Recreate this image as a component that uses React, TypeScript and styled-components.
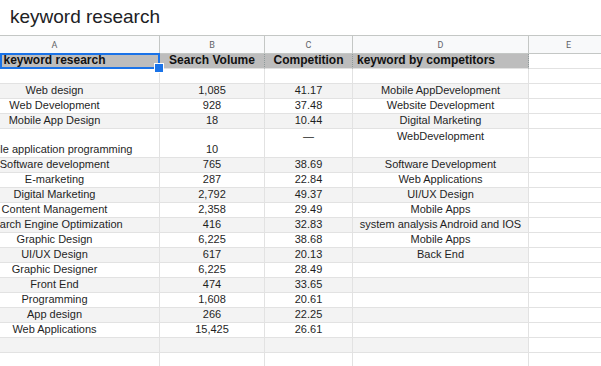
import styled, { createGlobalStyle } from 'styled-components'

interface Row {
  a?: string
  b?: string
  c?: string
  d?: string
  tall?: boolean
}

const rows: Row[] = [
  { a: 'Web design', b: '1,085', c: '41.17', d: 'Mobile AppDevelopment' },
  { a: 'Web Development', b: '928', c: '37.48', d: 'Website Development' },
  { a: 'Mobile App Design', b: '18', c: '10.44', d: 'Digital Marketing' },
  { a: 'Mobile application programming', b: '10', c: '—', d: 'WebDevelopment', tall: true },
  { a: 'Software development', b: '765', c: '38.69', d: 'Software Development' },
  { a: 'E-marketing', b: '287', c: '22.84', d: 'Web Applications' },
  { a: 'Digital Marketing', b: '2,792', c: '49.37', d: 'UI/UX Design' },
  { a: 'Content Management', b: '2,358', c: '29.49', d: 'Mobile Apps' },
  { a: 'Search Engine Optimization', b: '416', c: '32.83', d: 'system analysis Android and IOS' },
  { a: 'Graphic Design', b: '6,225', c: '38.68', d: 'Mobile Apps' },
  { a: 'UI/UX Design', b: '617', c: '20.13', d: 'Back End' },
  { a: 'Graphic Designer', b: '6,225', c: '28.49' },
  { a: 'Front End', b: '474', c: '33.65' },
  { a: 'Programming', b: '1,608', c: '20.61' },
  { a: 'App design', b: '266', c: '22.25' },
  { a: 'Web Applications', b: '15,425', c: '26.61' },
  {},
  {},
]

const columns = ['A', 'B', 'C', 'D', 'E']

export default function App() {
  return (
    <>
      <GlobalStyle />
      <TitleBar>keyword research</TitleBar>
      <Sheet>
        <Selection>
          <FillHandle />
        </Selection>
        <Grid>
          {columns.map((col) => (
            <ColumnLetter key={col}>{col}</ColumnLetter>
          ))}

          <HeaderCell>keyword research</HeaderCell>
          <HeaderCell>Search Volume</HeaderCell>
          <HeaderCell>Competition</HeaderCell>
          <HeaderCell $left>keyword by competitors</HeaderCell>
          <HeaderCell $blank />

          <Cell />
          <Cell />
          <Cell />
          <Cell />
          <Cell />

          {rows.map((row, i) => {
            const banded = i % 2 === 0
            return [
              <Cell key={`a${i}`} $banded={banded} $tall={row.tall}>
                {row.a}
              </Cell>,
              <Cell key={`b${i}`} $banded={banded} $tall={row.tall}>
                {row.b}
              </Cell>,
              <Cell key={`c${i}`} $banded={banded} $tall={row.tall} $top={row.tall}>
                {row.c}
              </Cell>,
              <Cell key={`d${i}`} $banded={banded} $tall={row.tall} $top={row.tall}>
                {row.d}
              </Cell>,
              <Cell key={`e${i}`} $tall={row.tall} />,
            ]
          })}
        </Grid>
      </Sheet>
    </>
  )
}

const GlobalStyle = createGlobalStyle`
  html, body {
    margin: 0;
    padding: 0;
    background: #ffffff;
    font-family: 'Liberation Sans', Arial, sans-serif;
  }
`

const TitleBar = styled.div`
  height: 35px;
  display: flex;
  align-items: center;
  padding-left: 10px;
  padding-bottom: 1px;
  box-sizing: border-box;
  font-size: 19px;
  color: #202124;
`

const Sheet = styled.div`
  position: relative;
  overflow: hidden;
  height: 331px;
  border-top: 1px solid #c4c7c5;
`

const Grid = styled.div`
  display: grid;
  grid-template-columns: 210px 105px 88px 176px 80px;
  grid-auto-rows: auto;
  margin-left: -50px;
  color: #1f1f1f;
`

const ColumnLetter = styled.div`
  height: 17px;
  display: flex;
  align-items: center;
  justify-content: center;
  background: #f8f9fa;
  border-right: 1px solid #c4c7c5;
  border-bottom: 1px solid #c4c7c5;
  font-family: Roboto, 'Liberation Sans', sans-serif;
  font-size: 9px;
  color: #5f6368;
`

interface HeaderProps {
  $left?: boolean
  $blank?: boolean
}

const HeaderCell = styled.div<HeaderProps>`
  height: 15px;
  box-sizing: border-box;
  display: flex;
  align-items: flex-end;
  justify-content: ${({ $left }) => ($left ? 'flex-start' : 'center')};
  padding: 0 4px 1px;
  background: ${({ $blank }) => ($blank ? '#ffffff' : '#bdbdbd')};
  border-right: 1px dotted ${({ $blank }) => ($blank ? '#e2e2e2' : '#8f9a9a')};
  border-bottom: 1px solid #e2e2e2;
  font-size: 12px;
  line-height: 13px;
  font-weight: bold;
  color: #111111;
  white-space: nowrap;
`

interface CellProps {
  $banded?: boolean
  $tall?: boolean
  $top?: boolean
}

const Cell = styled.div<CellProps>`
  height: ${({ $tall }) => ($tall ? '29px' : '15px')};
  box-sizing: border-box;
  display: flex;
  align-items: ${({ $top }) => ($top ? 'flex-start' : 'flex-end')};
  justify-content: center;
  padding: ${({ $top }) => ($top ? '1px 0 0' : '0 0 1px')};
  background: ${({ $banded }) => ($banded ? '#f3f3f3' : '#ffffff')};
  border-right: 1px solid #e2e2e2;
  border-bottom: 1px solid #e2e2e2;
  font-size: 11px;
  line-height: 13px;
  white-space: nowrap;
`

const Selection = styled.div`
  position: absolute;
  left: 0;
  top: 17px;
  width: 160px;
  height: 16px;
  box-sizing: border-box;
  border: 2px solid #1a73e8;
  z-index: 2;
  pointer-events: none;
`

const FillHandle = styled.div`
  position: absolute;
  right: -6px;
  bottom: -6px;
  width: 8px;
  height: 8px;
  background: #1a73e8;
  border: 1px solid #ffffff;
`
